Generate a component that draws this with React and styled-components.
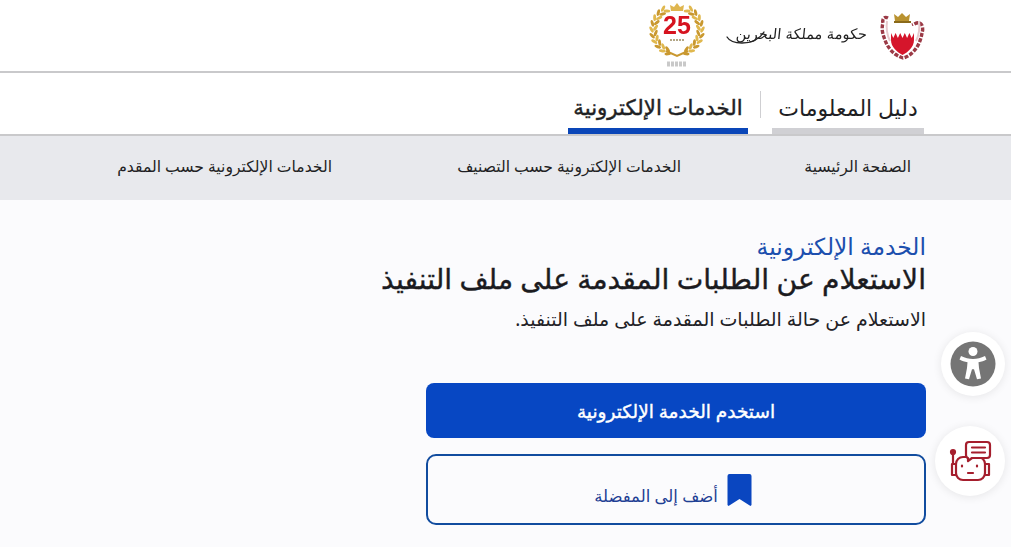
import React from "react";
import styled, { createGlobalStyle } from "styled-components";

const Global = createGlobalStyle`
  html, body { margin: 0; padding: 0; height: 100%; background: #fbfbfd; overflow: hidden; }
  body { font-family: "Noto Sans", "DejaVu Sans", "Liberation Sans", sans-serif; color: #1b1b1f; }
  * { box-sizing: border-box; }
`;

const Page = styled.div`
  width: 1011px;
  height: 547px;
  position: relative;
  overflow: hidden;
  direction: rtl;
`;

const TopBar = styled.header`
  height: 73px;
  background: #fff;
  border-bottom: 2px solid #c9c9cb;
  display: flex;
  align-items: flex-start;
  padding: 2px 86px 0 0;
`;

const Emblem = styled.svg`
  width: 46px;
  height: 50px;
  margin-top: 8px;
  filter: blur(0.5px);
`;

const Script = styled.svg`
  width: 145px;
  height: 40px;
  margin: 14px 8px 0 0;
  filter: blur(0.3px);
`;

const Jubilee = styled.svg`
  width: 60px;
  height: 68px;
  margin-right: 19px;
  filter: blur(0.4px);
`;

const TabBar = styled.nav`
  height: 63px;
  background: #fff;
  border-bottom: 2px solid #c9c9cb;
  display: flex;
  align-items: flex-end;
  padding-right: 87px;
`;

const Tab = styled.a`
  height: 45px;
  min-width: ${(p) => p.$w}px;
  font-size: ${(p) => (p.$active ? "21.3px" : "22px")};
  line-height: 32px;
  padding-top: 2px;
  -webkit-text-stroke: ${(p) => (p.$active ? "0.45px" : "0")};
  color: #1f1f24;
  text-align: center;
  white-space: nowrap;
  border-bottom: 6px solid ${(p) => (p.$active ? "#0a46b8" : "#d0d0d4")};
`;

const TabDivider = styled.span`
  width: 1px;
  height: 27px;
  background: #cfcfd2;
  margin: 0 11px 16px 12px;
  align-self: flex-end;
`;

const SubNav = styled.div`
  height: 64px;
  background: #e8e9ed;
  display: grid;
  grid-template-columns: 230px 349px 1fr;
  align-items: center;
  padding: 0 100px 4px 0;
`;

const SubLink = styled.a`
  font-size: 15.6px;
  color: #1f1f24;
  white-space: nowrap;
`;

const Main = styled.main`
  padding: 31px 85px 0 85px;
  display: flex;
  flex-direction: column;
  align-items: flex-start;
`;

const Eyebrow = styled.div`
  font-size: 23.4px;
  line-height: 30px;
  color: #1c4fae;
`;

const Title = styled.h1`
  margin: 0;
  font-size: 28.2px;
  line-height: 35px;
  font-weight: 400;
  -webkit-text-stroke: 0.4px #1b1b1f;
  color: #1b1b1f;
`;

const Lead = styled.p`
  margin: 9px 0 0;
  font-size: 19px;
  line-height: 28px;
  color: #222226;
`;

const Actions = styled.div`
  width: 500px;
  margin-top: 50px;
  display: flex;
  flex-direction: column;
  gap: 16px;
`;

const Primary = styled.button`
  height: 55px;
  border: 0;
  border-radius: 8px;
  background: #0747c3;
  color: #fff;
  font: 400 18.5px "Noto Sans", "DejaVu Sans", sans-serif;
  -webkit-text-stroke: 0.4px #fff;
  direction: rtl;
`;

const Secondary = styled.button`
  height: 71px;
  border: 2px solid #114c9f;
  border-radius: 10px;
  background: transparent;
  color: #1f3f94;
  font: 400 16.5px "Noto Sans", "DejaVu Sans", sans-serif;
  display: flex;
  align-items: center;
  justify-content: center;
  gap: 9px;
  padding: 0 6px 0 0;
  direction: rtl;
`;

const SecondaryLabel = styled.span`
  padding-top: 11px;
`;

const Float = styled.div`
  position: absolute;
  border-radius: 50%;
  background: #fff;
  box-shadow: 0 1px 10px rgba(0, 0, 0, 0.09);
  display: flex;
  align-items: center;
  justify-content: center;
  left: ${(p) => p.$x}px;
  top: ${(p) => p.$y}px;
  width: ${(p) => p.$s}px;
  height: ${(p) => p.$s}px;
`;

const laurel = (side) =>
  [21.5, 25.5].flatMap((r, row) =>
    Array.from({ length: 10 }).map((_, i) => {
      const deg = -62 + i * 14 + row * 5;
      const a = deg * (Math.PI / 180);
      const x = 30 + side * r * Math.cos(a);
      const y = 28 + r * Math.sin(a);
      return (
        <ellipse
          key={`${row}-${i}`}
          cx={x}
          cy={y}
          rx="1.5"
          ry="3.4"
          fill={i % 2 ? "#c9982f" : "#e0b84e"}
          transform={`rotate(${side * (deg + (row ? 30 : -30))} ${x} ${y})`}
        />
      );
    })
  );

export default function App() {
  return (
    <Page>
      <Global />
      <TopBar>
        <Emblem viewBox="0 0 46 50">
          <path d="M9 8C5 6 3 9 4 13c-2 6 0 12 2 17 2 6 6 11 10 14 3 2 5 3 8 4 4-1 7-3 10-6 5-5 8-12 9-19 1-3 1-7-1-9-3-3-6 0-9 1" fill="none" stroke="#9b3a46" strokeWidth="3.4" strokeDasharray="4 1.5" />
          <path d="M8 11c-1 7 0 14 3 20M40 11c1 7 0 14-3 20" fill="none" stroke="#e6c9cc" strokeWidth="2" />
          <path d="M16 11l-1-7 4 3 4-4 4 4 4-3-1 7z" fill="#b9922f" />
          <path d="M15 11h17v2H15z" fill="#8a6a1a" />
          <path d="M12 16h23v14c0 7-6 12-11.500 15C18 42 12 37 12 30z" fill="#d5152b" />
          <path d="M12 16h23v7l-2.300 5-2.300-5-2.300 5-2.300-5-2.300 5-2.300-5-2.300 5-2.300-5-2.300 5-2.300-5z" fill="#fff" />
        </Emblem>
        <Script viewBox="0 0 145 40" fill="none" stroke="#222" strokeLinecap="round">
          <path d="M1 21c3 5 9 6 15 6 9 0 17-3 22-11" strokeWidth="1.3" />
          <text x="141" y="23" textAnchor="start" direction="rtl" fontFamily="DejaVu Sans" fontSize="14.500" fill="#222" stroke="none" transform="skewX(-6) translate(2 0)">حكومة مملكة البحرين</text>
        </Script>
        <Jubilee viewBox="0 0 60 68">
          <path d="M24 9l-1-6 4 2 3-4 3 4 4-2-1 6z" fill="#dfb64f" />
          {laurel(1)}
          {laurel(-1)}
          <path d="M19 49l11 5 11-5" stroke="#c9982f" strokeWidth="2" fill="none" />
          <text x="30" y="32" textAnchor="middle" direction="ltr" fontFamily="Liberation Sans" fontWeight="700" fontSize="25" fill="#d6131f">25</text>
          <path d="M23 38h14" stroke="#9a8a60" strokeWidth="1.6" strokeDasharray="2 1" />
          <path d="M20 62h20" stroke="#c9c9c9" strokeWidth="5" strokeDasharray="3 1" />
        </Jubilee>
      </TopBar>
      <TabBar>
        <Tab $w={152}>دليل المعلومات</Tab>
        <TabDivider />
        <Tab $active $w={180}>الخدمات الإلكترونية</Tab>
      </TabBar>
      <SubNav>
        <SubLink>الصفحة الرئيسية</SubLink>
        <SubLink>الخدمات الإلكترونية حسب التصنيف</SubLink>
        <SubLink>الخدمات الإلكترونية حسب المقدم</SubLink>
      </SubNav>
      <Main>
        <Eyebrow>الخدمة الإلكترونية</Eyebrow>
        <Title>الاستعلام عن الطلبات المقدمة على ملف التنفيذ</Title>
        <Lead>الاستعلام عن حالة الطلبات المقدمة على ملف التنفيذ.</Lead>
        <Actions>
          <Primary>استخدم الخدمة الإلكترونية</Primary>
          <Secondary>
            <svg width="25" height="32" viewBox="0 0 24 32">
              <path d="M2 0h20a2 2 0 0 1 2 2v29l-1 1-11-7-11 7-1-1V2a2 2 0 0 1 2-2z" fill="#0a46c0" />
            </svg>
            <SecondaryLabel>أضف إلى المفضلة</SecondaryLabel>
          </Secondary>
        </Actions>
      </Main>
      <Float $x={941} $y={332} $s={64}>
        <svg width="46" height="46" viewBox="0 0 46 46">
          <circle cx="23" cy="23" r="22.5" fill="#757575" />
          <circle cx="23" cy="10.5" r="4.500" fill="#fff" />
          <path d="M11 15c4 2 8 3 12 3s8-1 12-3l1.500 3.400c-2.500 1.400-5 2.300-8 2.800l.5 5.800 2 10.500-4 .8-3-10h-2l-3 10-4-.8 2-10.500.5-5.800c-3-.5-5.500-1.400-8-2.800z" fill="#fff" />
        </svg>
      </Float>
      <Float $x={935} $y={426} $s={70}>
        <svg width="44" height="44" viewBox="0 0 44 44" fill="none" stroke="#a51e2d" strokeWidth="2.200" strokeLinecap="round" strokeLinejoin="round">
          <circle cx="5" cy="13" r="2" fill="#a51e2d" />
          <path d="M5 15v9" />
          <rect x="8" y="18" width="29" height="23" rx="7" fill="#fff" />
          <path d="M8 25H4v11h4M37 25h4v11h-4" />
          <path d="M18 16V6a3 3 0 0 1 3-3h18a3 3 0 0 1 3 3v10a3 3 0 0 1-3 3H24l-4 3v-3a3 3 0 0 1-2-3z" fill="#fff" />
          <path d="M24 8.500h13M24 13.500h13" />
          <path d="M14 26.500v1M29 26.500v1M20 34h5" />
        </svg>
      </Float>
    </Page>
  );
}
